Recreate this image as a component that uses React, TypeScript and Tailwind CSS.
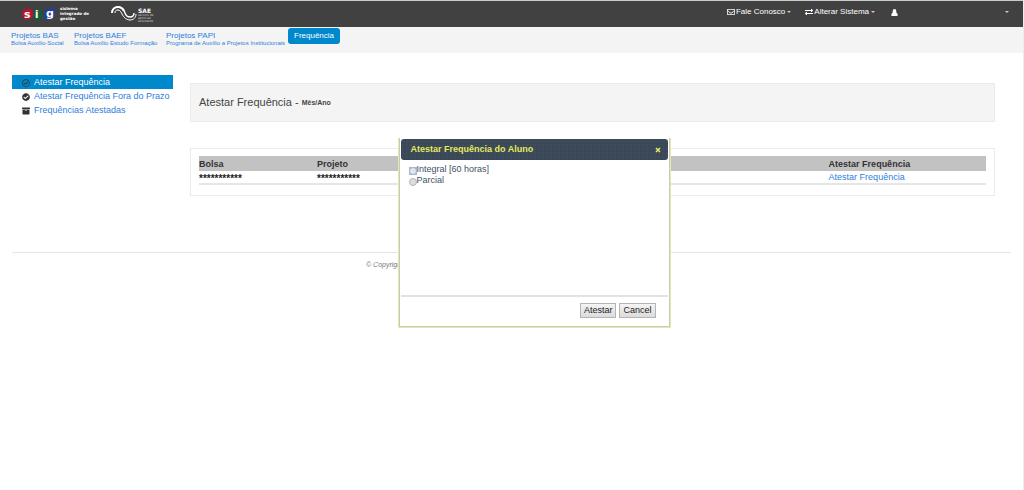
import { FaRegEnvelope, FaExchangeAlt, FaArchive, FaCheckCircle, FaRegCheckCircle } from "react-icons/fa";

const projects = [
  { title: "Projetos BAS", sub: "Bolsa Auxílio-Social", width: "w-[63px]" },
  { title: "Projetos BAEF", sub: "Bolsa Auxílio Estudo Formação", width: "w-[92px]" },
  { title: "Projetos PAPI", sub: "Programa de Auxílio a Projetos Institucionais", width: "w-[122px]" },
];

const sideLinks = [
  { label: "Atestar Frequência", icon: FaRegCheckCircle, active: true },
  { label: "Atestar Frequência Fora do Prazo", icon: FaCheckCircle, active: false },
  { label: "Frequências Atestadas", icon: FaArchive, active: false },
];

const Caret = () => (
  <svg viewBox="0 0 4 2" className="ml-px h-[2px] w-1 shrink-0" aria-hidden="true">
    <path d="M0 0h4L2 2z" fill="#ccc" />
  </svg>
);

const UserIcon = () => (
  <svg viewBox="0 0 7 7" className="size-[7px]" fill="#fff" aria-hidden="true">
    <ellipse cx="3.5" cy="2.2" rx="1.8" ry="2.2" />
    <path d="M0.500 7C0 5 1 3.700 2 3.500h3C6 3.700 7 5 6.500 7z" />
  </svg>
);

const SigLogo = () => (
  <svg viewBox="0 0 34 14" className="h-[14px] w-[34px]" role="img" aria-label="SIG">
    <path d="M0 5C2 2 6 1 10 2l2 6c-2 4-6 5-9 5C1 11 0 8 0 5z" fill="#b8142c" />
    <path d="M11 6c1-3 4-4 8-4l3 7c-2 3-5 4-9 4z" fill="#175c38" />
    <path d="M22 4c3-3 7-4 11-3 1 4 0 8-3 11-3 1-6 1-8-1z" fill="#263f96" />
    <g fill="#fff" fontFamily="'DejaVu Sans', sans-serif" fontWeight="bold">
      <text x="2" y="11" fontSize="11">s</text>
      <text x="13" y="11" fontSize="10">i</text>
      <text x="24" y="10" fontSize="11">g</text>
    </g>
  </svg>
);

const SaeLogo = () => (
  <svg viewBox="0 0 26 15" className="h-[15px] w-[26px]" aria-hidden="true">
    <g fill="none" stroke="#fff">
      <path d="M1 7C1 3 4 1 7 1c4 0 6 3 7 6s3 4 5 4 4-1 4-4" strokeWidth="1.400" />
      <path d="M1 7C1 3 4 1 7 1c3 0 5 2 6 4" strokeWidth="2" />
      <path d="M4 7c0-2 1-3 3-3 2 0 3 2 4 4 2 4 5 6 8 6s6-2 6-6" strokeWidth="1" />
    </g>
  </svg>
);

const Header = () => (
  <header className="flex h-[27px] items-center border-t border-[#c9cdc9] bg-[#414141] text-white">
    <div className="flex items-center pb-px pl-[22px]">
      <SigLogo />
      <p className="ml-1 w-[51px] font-['DejaVu_Sans',sans-serif] text-[4px] leading-[5px] font-bold">
        sistema
        <br />
        integrado de
        <br />
        gestão
      </p>
      <SaeLogo />
      <div className="ml-px pt-1 font-['DejaVu_Sans',sans-serif]">
        <p className="text-[6px] leading-[6px] font-bold">SAE</p>
        <p className="text-[3px] leading-[3px] text-[#ccc]">
          serviço de
          <br />
          apoio ao
          <br />
          estudante
        </p>
      </div>
    </div>
    <nav className="ml-auto flex items-center pb-1 text-[8px] leading-[10px]">
      <button type="button" className="mr-[14px] flex items-center gap-px">
        <FaRegEnvelope className="size-2" />
        Fale Conosco
        <Caret />
      </button>
      <button type="button" className="mr-4 flex items-center gap-px">
        <FaExchangeAlt className="size-2" />
        Alterar Sistema
        <Caret />
      </button>
      <button type="button" aria-label="Usuário" className="mr-[14px] flex w-[118px] items-center justify-between">
        <UserIcon />
        <Caret />
      </button>
    </nav>
  </header>
);

const ProjectNav = () => (
  <nav className="flex h-[26px] items-start bg-[#f4f4f4] pl-[11px]">
    {projects.map((project) => (
      <a key={project.title} href="#" className={`${project.width} pt-[5px] whitespace-nowrap text-[#2f80dc]`}>
        <span className="block text-[8px] leading-[8px]">{project.title}</span>
        <span className="block text-[6px] leading-[7px]">{project.sub}</span>
      </a>
    ))}
    <a href="#" className="mt-px flex h-4 items-center rounded-[3px] bg-[#0088cc] px-[6px] text-[8px] text-white">
      Frequência
    </a>
  </nav>
);

const Sidebar = () => (
  <aside className="w-[161px] shrink-0">
    {sideLinks.map(({ label, icon: Icon, active }) => (
      <a
        key={label}
        href="#"
        className={`flex h-[14px] items-center gap-1 pt-px pl-[10px] text-[9px] whitespace-nowrap ${
          active ? "bg-[#0088cc] text-white" : "text-[#2f80dc]"
        }`}
      >
        <Icon className="size-2 text-[#333]" />
        {label}
      </a>
    ))}
  </aside>
);

const GrantsTable = () => (
  <table className="w-full table-fixed text-left text-[9px] leading-[12px]">
    <thead>
      <tr className="h-[15px] bg-[#c2c2c2] text-[#333]">
        <th className="w-[15%]">Bolsa</th>
        <th>Projeto</th>
        <th className="w-[20%]">Atestar Frequência</th>
      </tr>
    </thead>
    <tbody>
      <tr className="border-b-2 border-[#e6e6e6] text-[#222]">
        <td className="pt-[3px] text-[10px] leading-[9px] font-bold">***********</td>
        <td className="pt-[3px] text-[10px] leading-[9px] font-bold">***********</td>
        <td>
          <a href="#" className="text-[#2f80dc]">
            Atestar Frequência
          </a>
        </td>
      </tr>
    </tbody>
  </table>
);

const FrequencyDialog = () => (
  <div
    role="dialog"
    aria-labelledby="dialog-title"
    className="absolute top-[138px] left-1/2 -ml-[114px] flex h-[190px] w-[273px] flex-col border border-t-0 border-[#e8ea9c] bg-white px-[2px] pt-px text-[9px] shadow-[inset_1px_-1px_0_#c5c9c9,inset_-1px_0_0_#c5c9c9]"
  >
    <div className="flex h-[21px] shrink-0 items-center justify-between rounded-[3px] bg-[#3b4858] bg-[radial-gradient(#3f4d5e_1px,transparent_1px)] bg-[size:4px_4px] pr-[7px] pl-[10px] font-bold text-[#e6ea5c]">
      <h2 id="dialog-title">Atestar Frequência do Aluno</h2>
      <button type="button" aria-label="Fechar">
        <svg viewBox="0 0 6 6" className="size-[6px]" aria-hidden="true">
          <path d="M1 1l4 4M5 1 1 5" stroke="#e6ea5c" strokeWidth="1.500" />
        </svg>
      </button>
    </div>
    <fieldset className="flex-1 pt-1 pl-2 leading-[11px] text-[#3f5068]">
      <label className="flex items-center">
        <span className="mt-[3px] flex bg-[#d3e3fa] ring-1 ring-[#94b8ee] ring-inset">
          <input
            type="radio"
            name="frequency"
            className="size-2 appearance-none rounded-full border border-[#a9b4c4] bg-[#e4e6ea]"
          />
        </span>
        Integral [60 horas]
      </label>
      <label className="flex items-center">
        <input
          type="radio"
          name="frequency"
          className="mt-[3px] size-2 appearance-none rounded-full border border-[#b5b5b5] bg-[#dedede]"
        />
        Parcial
      </label>
    </fieldset>
    <div className="flex h-8 shrink-0 justify-end gap-[3px] border-t-2 border-[#e2e2e2] pt-[6px] pr-3 text-[#222]">
      <button type="button" className="h-[15px] border border-[#b4b4b4] bg-linear-to-b from-[#f4f4f4] to-[#dcdcdc] px-[3px]">
        Atestar
      </button>
      <button type="button" className="h-[15px] border border-[#b4b4b4] bg-linear-to-b from-[#f4f4f4] to-[#dcdcdc] px-[3px]">
        Cancel
      </button>
    </div>
  </div>
);

const App = () => {
  return (
    <div className="relative min-h-screen border-r border-[#ececec] bg-white font-['Liberation_Sans',Arial,sans-serif]">
      <Header />
      <ProjectNav />
      <div className="flex gap-[17px] pt-[22px] pr-7 pl-3">
        <Sidebar />
        <main className="flex-1 pt-2">
          <h1 className="flex h-[39px] items-center gap-[3px] border border-[#ebebeb] bg-[#f4f4f4] px-2 text-[11px] text-[#444]">
            Atestar Frequência -<small className="pt-[2px] text-[7px] font-bold">Mês/Ano</small>
          </h1>
          <section className="mt-[26px] border border-[#ebebeb] px-2 pt-[7px] pb-[10px]">
            <GrantsTable />
          </section>
        </main>
      </div>
      <footer className="mt-14 mr-3 ml-3 border-t border-[#e6e6e6] pt-[7px] text-[7px] leading-[10px] text-[#777] italic">
        <p className="pl-[354px]">© Copyright</p>
      </footer>
      <FrequencyDialog />
    </div>
  );
};

export default App;
